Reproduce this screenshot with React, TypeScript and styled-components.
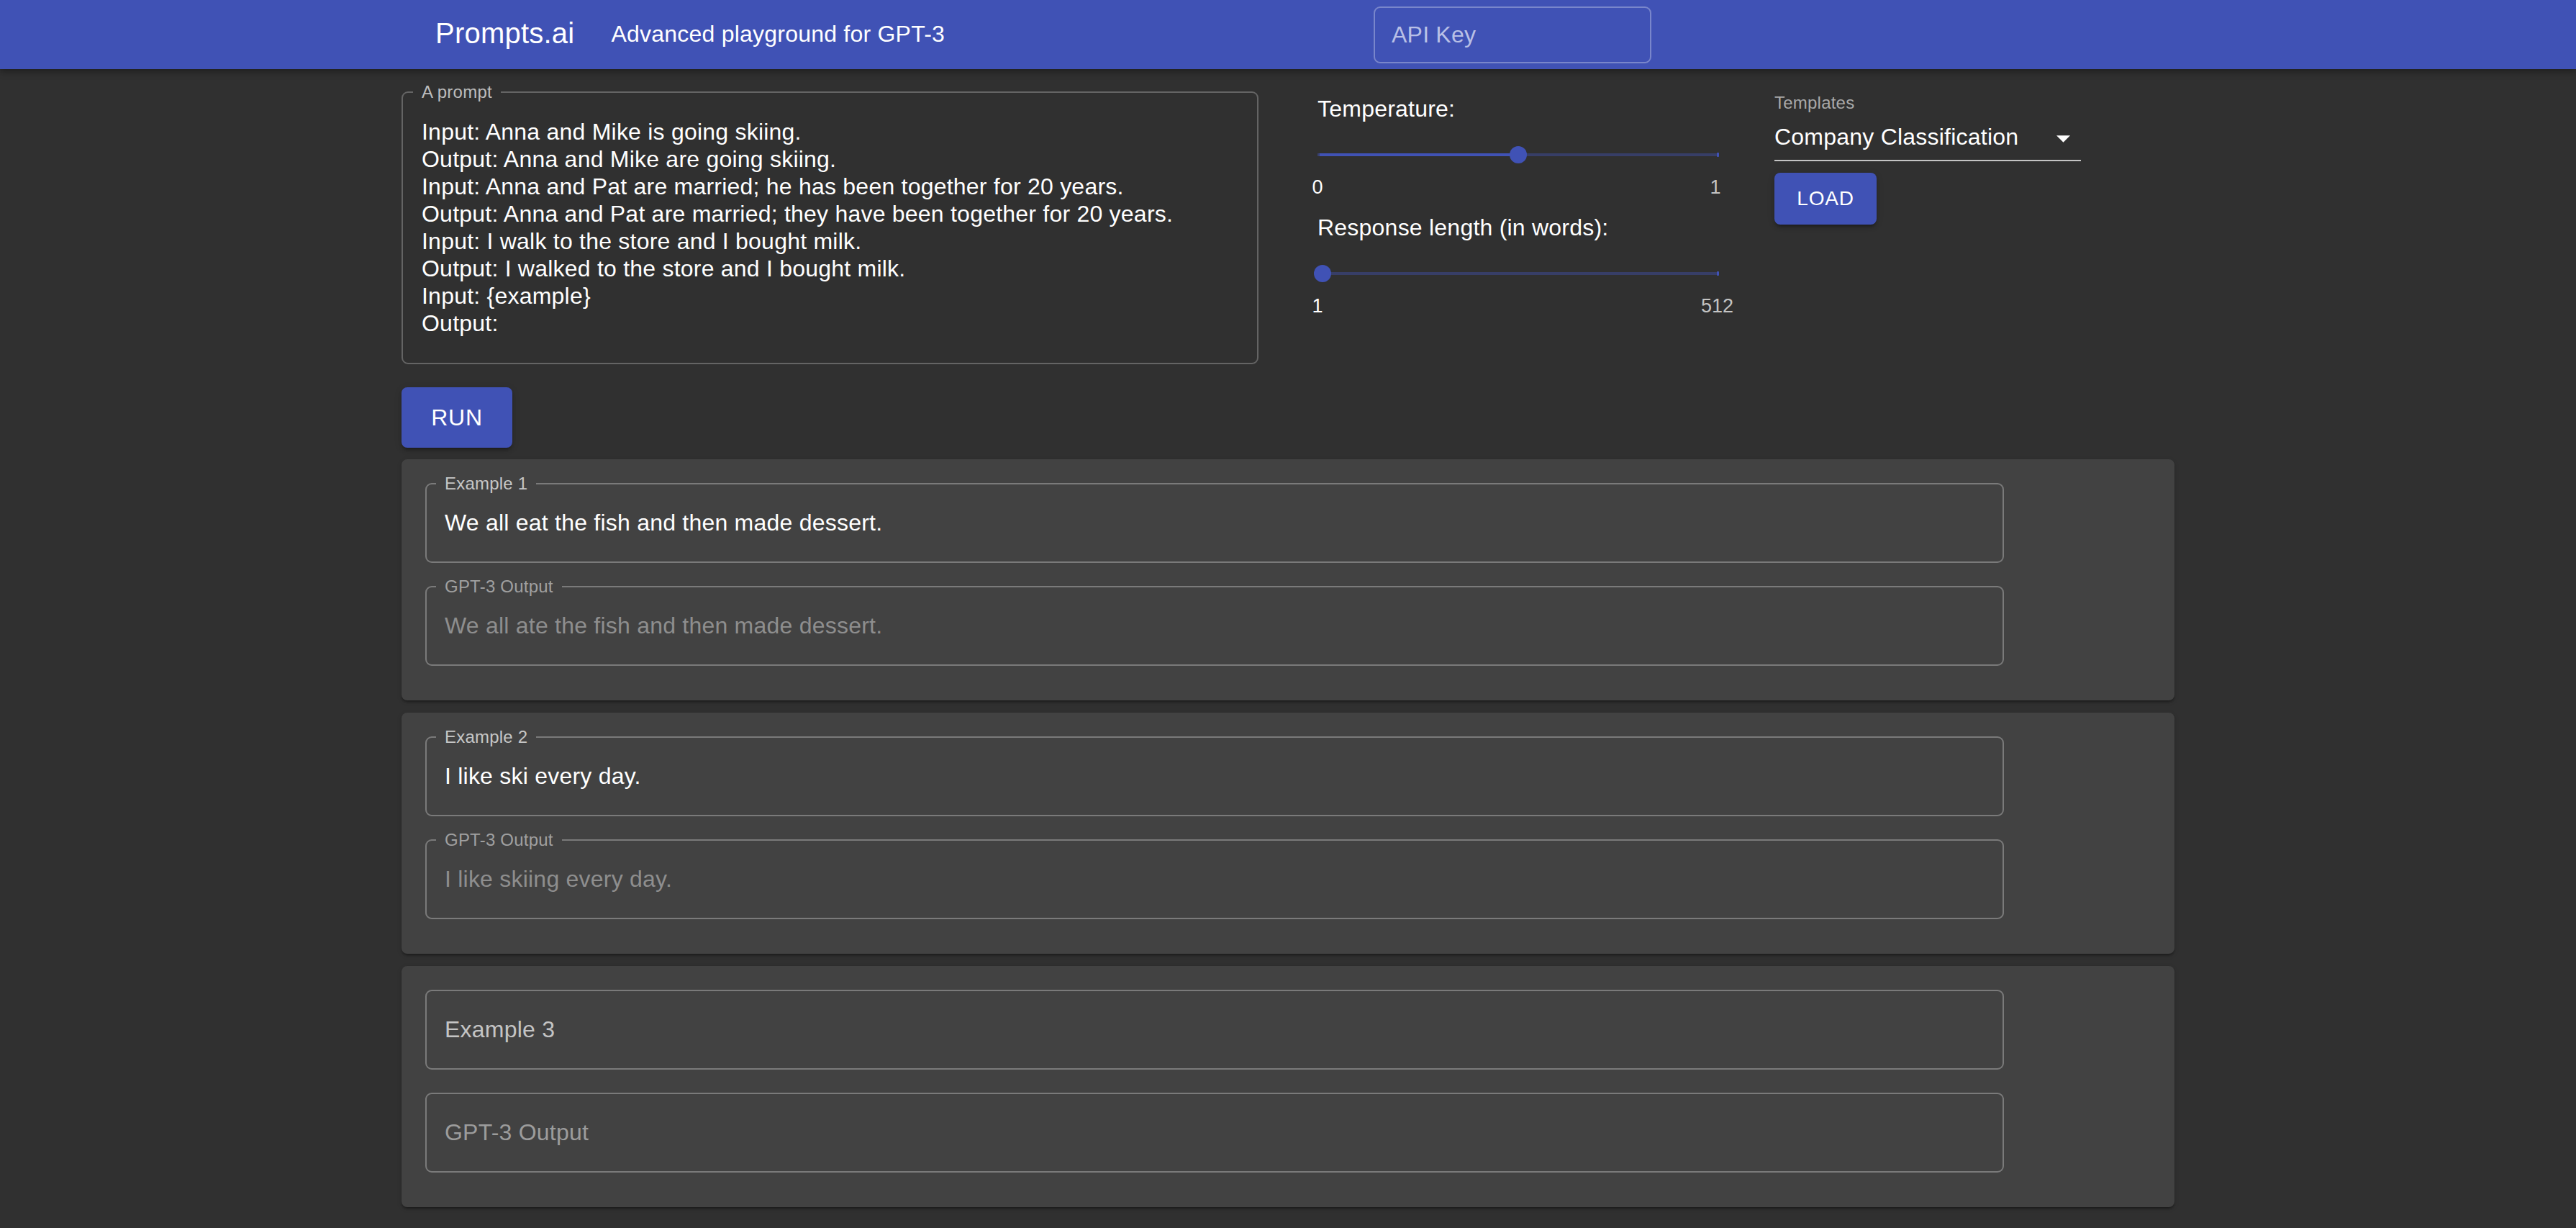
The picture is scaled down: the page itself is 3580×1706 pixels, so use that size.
import React from 'react';
import styled, { createGlobalStyle } from 'styled-components';

const GlobalStyle = createGlobalStyle`
  html, body {
    margin: 0;
    padding: 0;
    background: #303030;
  }
  body {
    font-family: "Liberation Sans", Arial, Helvetica, sans-serif;
    letter-spacing: 0.014em;
    color: #fff;
  }
  * {
    box-sizing: border-box;
  }
`;

const promptText = `Input: Anna and Mike is going skiing.
Output: Anna and Mike are going skiing.
Input: Anna and Pat are married; he has been together for 20 years.
Output: Anna and Pat are married; they have been together for 20 years.
Input: I walk to the store and I bought milk.
Output: I walked to the store and I bought milk.
Input: {example}
Output:`;

const examples = [
  { label: 'Example 1', value: 'We all eat the fish and then made dessert.', output: 'We all ate the fish and then made dessert.' },
  { label: 'Example 2', value: 'I like ski every day.', output: 'I like skiing every day.' },
  { label: 'Example 3', value: '', output: '' },
];

const Page = styled.div`
  min-height: 1706px;
  background: #303030;
`;

const AppBar = styled.header`
  height: 96px;
  background: #4052b5;
  display: flex;
  align-items: center;
  padding: 0 1285px 0 605px;
  box-shadow: 0 4px 9px rgba(0, 0, 0, 0.35);
  position: relative;
  z-index: 1;
`;

const Brand = styled.div`
  font-size: 40px;
  line-height: 1;
  margin-top: -4px;
`;

const Tagline = styled.div`
  font-size: 32px;
  line-height: 1;
  margin: -3px 0 0 51px;
`;

const ApiField = styled.div`
  margin-left: auto;
  width: 386px;
  height: 79px;
  border: 2px solid rgba(255, 255, 255, 0.3);
  border-radius: 9px;
  padding-left: 23px;
  display: flex;
  align-items: center;
  font-size: 32px;
  line-height: 1;
  color: #b9c0e6;
`;

const Main = styled.main`
  width: 2464px;
  margin-left: 558px;
  padding-top: 20px;
`;

const TopRow = styled.div`
  display: flex;
  align-items: flex-start;
`;

const Outline = styled.fieldset<{ $width: number; $border: string }>`
  margin: 0;
  min-width: 0;
  width: ${(p) => p.$width}px;
  border: 2px solid ${(p) => p.$border};
  border-radius: 9px;
`;

const PromptBox = styled(Outline)`
  padding: 24px 26px 36px 26px;
`;

const Legend = styled.legend<{ $color: string; $empty?: boolean }>`
  height: 24px;
  font-size: 24px;
  line-height: 24px;
  padding: ${(p) => (p.$empty ? '0' : '0 12px')};
  margin-left: ${(p) => (p.$empty ? '0' : '-12px')};
  color: ${(p) => p.$color};
  white-space: nowrap;
`;

const PromptText = styled.div`
  white-space: pre-line;
  font-size: 32px;
  line-height: 38px;
  color: #fff;
`;

const SliderCol = styled.div`
  width: 558px;
  margin-left: 82px;
  padding-top: 16px;
`;

const SliderBlock = styled.div`
  & + & {
    margin-top: 21px;
  }
`;

const SliderTitle = styled.div`
  font-size: 32px;
  line-height: 38px;
`;

const TrackArea = styled.div`
  height: 48px;
  margin-top: 21px;
  display: flex;
  align-items: center;
`;

const Rail = styled.div`
  position: relative;
  flex: 1;
  height: 4px;
  border-radius: 2px;
  background: #373e67;
`;

const Fill = styled.div`
  position: absolute;
  left: 0;
  top: 0;
  bottom: 0;
  border-radius: 2px;
  background: #4052b5;
`;

const Mark = styled.span<{ $end?: boolean; $active?: boolean }>`
  position: absolute;
  top: 50%;
  width: 3px;
  height: ${(p) => (p.$end ? 6 : 4)}px;
  transform: translateY(-50%);
  ${(p) => (p.$end ? 'right: 0;' : 'left: 0;')}
  border-radius: 1px;
  background: ${(p) => (p.$active ? '#39416f' : '#4052b5')};
`;

const Thumb = styled.span`
  position: absolute;
  top: 50%;
  width: 24px;
  height: 24px;
  border-radius: 50%;
  background: #4052b5;
  transform: translate(-50%, -50%);
`;

const MarkRow = styled.div`
  display: flex;
  justify-content: space-between;
  margin: 5px -15px 0 -20px;
`;

const MarkLabel = styled.span<{ $active?: boolean }>`
  width: 40px;
  text-align: center;
  font-size: 27px;
  line-height: 32px;
  letter-spacing: 0;
  color: ${(p) => (p.$active ? '#fff' : 'rgba(255,255,255,0.72)')};
`;

const TemplatesCol = styled.div`
  width: 426px;
  margin-left: 77px;
  padding-top: 15px;
`;

const SelectLabel = styled.div`
  font-size: 24px;
  line-height: 24px;
  color: #a9a9a9;
`;

const SelectBox = styled.div`
  margin-top: 16px;
  display: flex;
  align-items: center;
  justify-content: space-between;
  padding: 0 15px 13px 0;
  border-bottom: 2px solid #c4c4c4;
  font-size: 32px;
  line-height: 38px;

  svg {
    margin-top: 5px;
  }
`;

const Button = styled.button<{ $w: number; $h: number; $size: number }>`
  display: flex;
  align-items: center;
  justify-content: center;
  width: ${(p) => p.$w}px;
  height: ${(p) => p.$h}px;
  padding: 0;
  border: none;
  border-radius: 8px;
  background: #4052b5;
  color: #fff;
  font-family: inherit;
  font-size: ${(p) => p.$size}px;
  letter-spacing: 0.8px;
  box-shadow: 0 6px 3px -4px rgba(0, 0, 0, 0.2), 0 4px 5px 0 rgba(0, 0, 0, 0.14), 0 2px 11px 0 rgba(0, 0, 0, 0.12);
  cursor: pointer;
`;

const LoadButton = styled(Button)`
  margin-top: 16px;
`;

const RunButton = styled(Button)`
  margin-top: 32px;
`;

const CardList = styled.div`
  margin-top: 16px;
  display: flex;
  flex-direction: column;
  gap: 17px;
`;

const Card = styled.section`
  background: #424242;
  border-radius: 8px;
  padding: 22px 32px 48px 33px;
  display: flex;
  flex-direction: column;
  gap: 21px;
  box-shadow: 0 4px 3px -2px rgba(0, 0, 0, 0.22), 0 2px 3px 0 rgba(0, 0, 0, 0.14), 0 2px 7px 0 rgba(0, 0, 0, 0.12);
`;

const FieldBox = styled(Outline)`
  padding: 23px 25px 35px 25px;
`;

const FieldText = styled.div<{ $color: string }>`
  font-size: 32px;
  line-height: 38px;
  color: ${(p) => p.$color};
  white-space: nowrap;
`;

type SliderProps = { title: string; min: string; max: string; pct: number };

const Slider = ({ title, min, max, pct }: SliderProps) => (
  <SliderBlock>
    <SliderTitle>{title}</SliderTitle>
    <TrackArea>
      <Rail>
        <Fill style={{ width: `${pct}%` }} />
        <Mark $active />
        <Mark $end />
        <Thumb style={{ left: `${pct}%` }} />
      </Rail>
    </TrackArea>
    <MarkRow>
      <MarkLabel $active>{min}</MarkLabel>
      <MarkLabel>{max}</MarkLabel>
    </MarkRow>
  </SliderBlock>
);

type FieldProps = { label: string; value: string; output?: boolean };

const Field = ({ label, value, output }: FieldProps) => {
  const empty = !value;
  const legendColor = output ? '#a0a0a0' : '#c6c6c6';
  let color = '#fff';
  if (output) color = empty ? '#9c9c9c' : '#8e8e8e';
  else if (empty) color = '#c4c4c4';
  return (
    <FieldBox $width={2194} $border="#7a7a7a">
      <Legend $color={legendColor} $empty={empty}>
        {empty ? '' : label}
      </Legend>
      <FieldText $color={color}>{empty ? label : value}</FieldText>
    </FieldBox>
  );
};

const DropArrow = () => (
  <svg width="19" height="10" viewBox="0 0 10 5">
    <path d="M0 0l5 5 5-5z" fill="#fff" />
  </svg>
);

export default function App() {
  return (
    <Page>
      <GlobalStyle />
      <AppBar>
        <Brand>Prompts.ai</Brand>
        <Tagline>Advanced playground for GPT-3</Tagline>
        <ApiField>API Key</ApiField>
      </AppBar>
      <Main>
        <TopRow>
          <PromptBox $width={1191} $border="#646464">
            <Legend $color="#bdbdbd">A prompt</Legend>
            <PromptText>{promptText}</PromptText>
          </PromptBox>
          <SliderCol>
            <Slider title="Temperature:" min="0" max="1" pct={50} />
            <Slider title="Response length (in words):" min="1" max="512" pct={1.2} />
          </SliderCol>
          <TemplatesCol>
            <SelectLabel>Templates</SelectLabel>
            <SelectBox>
              <span>Company Classification</span>
              <DropArrow />
            </SelectBox>
            <LoadButton $w={142} $h={72} $size={28}>LOAD</LoadButton>
          </TemplatesCol>
        </TopRow>
        <RunButton $w={154} $h={84} $size={32}>RUN</RunButton>
        <CardList>
          {examples.map((ex) => (
            <Card key={ex.label}>
              <Field label={ex.label} value={ex.value} />
              <Field label="GPT-3 Output" value={ex.output} output />
            </Card>
          ))}
        </CardList>
      </Main>
    </Page>
  );
}
